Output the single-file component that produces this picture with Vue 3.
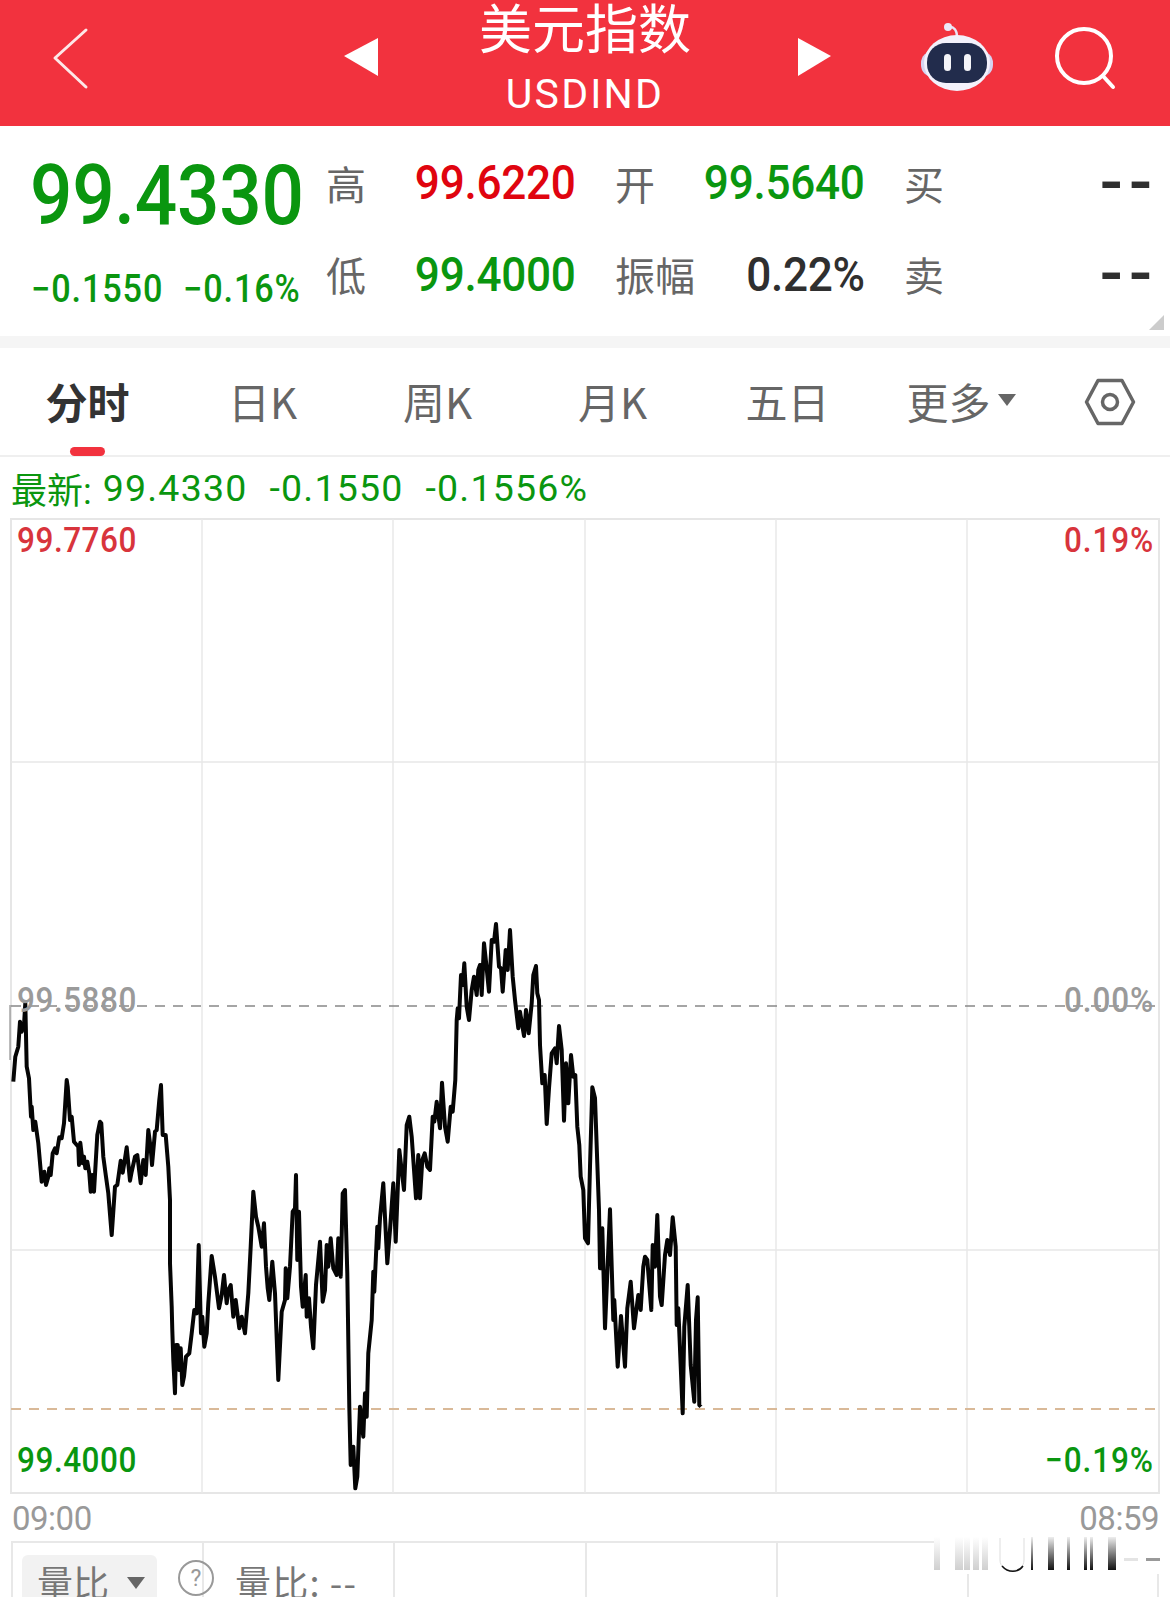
<template>
  <div class="page">
    <header class="topbar">
      <svg class="back" width="344" height="126" viewBox="0 0 344 126">
        <path d="M86 30 L55 58 L86 87" fill="none" stroke="#fde8e8" stroke-width="3" stroke-linecap="round" stroke-linejoin="round" />
      </svg>
      <svg class="prev" width="34" height="38" viewBox="0 0 34 38"><path d="M0 18 L34 0 V38 Z" fill="#fff" /></svg>
      <div class="title">
        <div class="title-cn">美元指数</div>
        <div class="title-en">USDIND</div>
      </div>
      <svg class="next" width="33" height="38" viewBox="0 0 33 38"><path d="M0 0 L33 18 L0 38 Z" fill="#fff" /></svg>
      <div class="top-actions">
        <svg width="76" height="70" viewBox="0 0 76 70">
          <path d="M38 16 C38 8 34 6 31 6" fill="none" stroke="#e9e4f6" stroke-width="2.5" />
          <circle cx="29" cy="6" r="4" fill="#ece8f8" />
          <rect x="2" y="30" width="72" height="26" rx="12" fill="#d6d3f0" />
          <ellipse cx="38" cy="42" rx="33" ry="28" fill="#f3f1fb" />
          <rect x="8" y="22" width="60" height="40" rx="19" fill="#222c4c" />
          <rect x="25" y="33" width="7" height="17" rx="3.5" fill="#f4f4f8" />
          <rect x="45" y="33" width="7" height="17" rx="3.5" fill="#f4f4f8" />
        </svg>
        <svg class="search" width="64" height="68" viewBox="0 0 64 68">
          <circle cx="31" cy="29" r="27" fill="none" stroke="#fff" stroke-width="4" />
          <path d="M50 49 L60 60" stroke="#fff" stroke-width="4" stroke-linecap="round" />
        </svg>
      </div>
    </header>

    <section class="quote">
      <div class="price-box">
        <div class="price">99.4330</div>
        <div class="change">
          <span class="change-abs">−0.1550</span>
          <span>−0.16%</span>
        </div>
      </div>
      <div class="stats">
        <div v-for="s in stats" :key="s.label" class="stat">
          <span class="stat-label">{{ s.label }}</span>
          <span class="stat-value" :class="s.tone">{{ s.value }}</span>
        </div>
      </div>
      <span class="corner"></span>
    </section>

    <nav class="tabs">
      <div v-for="(t, i) in tabs" :key="t" class="tab" :class="{ active: i === 0, more: i === 5 }">
        {{ t }}
        <i v-if="i === 5" class="caret"></i>
      </div>
      <div class="settings">
        <svg width="52" height="48" viewBox="0 0 52 48">
          <path d="M14 2.5 H38 L49.5 24 L38 45.5 H14 L2.5 24 Z" fill="none" stroke="#666" stroke-width="3.5" stroke-linejoin="round" />
          <circle cx="26" cy="24" r="7.5" fill="none" stroke="#666" stroke-width="3.5" />
        </svg>
      </div>
    </nav>

    <div class="latest">
      <span class="latest-cn">最新:</span>
      <span>99.4330</span>
      <span>-0.1550</span>
      <span>-0.1556%</span>
    </div>

    <div class="plot">
      <svg width="1170" height="977" viewBox="0 518 1170 977">
        <rect x="11" y="519" width="1148" height="974" fill="none" stroke="#e6e6e6" stroke-width="2" />
        <path v-for="x in columns" :key="x" :d="`M${x} 519 V1493`" stroke="#e8e8e8" stroke-width="1.5" />
        <path d="M11 762 H1159 M11 1250 H1159" stroke="#e8e8e8" stroke-width="1.5" />
        <path d="M11 1006 H1159" stroke="#888" stroke-width="1.5" stroke-dasharray="10 8" />
        <path d="M11 1409 H1159" stroke="#d9b998" stroke-width="2" stroke-dasharray="10 8" />
        <path d="M10 1005 V1060" stroke="#777" stroke-width="1" />
        <polyline :points="linePoints" fill="none" stroke="#050505" stroke-width="4" stroke-linejoin="round" />
      </svg>
      <span class="axis top left red">99.7760</span>
      <span class="axis top right red">0.19%</span>
      <span class="axis mid left gray">99.5880</span>
      <span class="axis mid right gray">0.00%</span>
      <span class="axis low left green">99.4000</span>
      <span class="axis low right green">−0.19%</span>
    </div>

    <div class="times">
      <span>09:00</span>
      <span>08:59</span>
    </div>

    <div class="volume">
      <i v-for="x in columns" :key="x" class="vline" :style="{ left: x - 13 + 'px' }"></i>
      <div class="vol-select">
        量比
        <i class="vol-caret"></i>
      </div>
      <svg class="help" width="38" height="38" viewBox="0 0 38 38">
        <circle cx="19" cy="19" r="17" fill="none" stroke="#999" stroke-width="2" />
        <text x="19" y="27" text-anchor="middle" font-size="23" fill="#999" font-family="Roboto, sans-serif">?</text>
      </svg>
      <span class="vol-text">量比: --</span>
      <svg class="smear" width="232" height="38" viewBox="0 0 232 38">
        <defs>
          <linearGradient id="fadeLight" x1="0" y1="0" x2="0" y2="1">
            <stop offset="0" stop-color="#fff" />
            <stop offset="1" stop-color="#cfcfcf" />
          </linearGradient>
          <linearGradient id="fadeDark" x1="0" y1="0" x2="0" y2="1">
            <stop offset="0" stop-color="#eee" />
            <stop offset="1" stop-color="#111" />
          </linearGradient>
        </defs>
        <rect width="232" height="38" fill="#fff" />
        <rect v-for="b in lightBars" :key="b[0]" :x="b[0]" y="1" :width="b[1]" height="33" fill="url(#fadeLight)" />
        <path d="M66 2 V24 C66 38 90 38 90 24 V2" fill="none" stroke="#ddd" stroke-width="1" />
        <path d="M68 30 C74 37 84 37 89 30" fill="none" stroke="#111" stroke-width="1.5" />
        <rect v-for="b in darkBars" :key="b[0]" :x="b[0]" y="1" :width="b[1]" height="33" fill="url(#fadeDark)" />
        <rect x="190" y="22" width="14" height="3" fill="#e4e4e4" />
        <rect x="212" y="22" width="14" height="3" fill="#999" />
      </svg>
    </div>
  </div>
</template>

<script setup>
const stats = [
  { label: '高', value: '99.6220', tone: 'red' },
  { label: '开', value: '99.5640', tone: 'green' },
  { label: '买', value: '--', tone: 'dark dash' },
  { label: '低', value: '99.4000', tone: 'green' },
  { label: '振幅', value: '0.22%', tone: 'dark' },
  { label: '卖', value: '--', tone: 'dark dash' }
]

const tabs = ['分时', '日K', '周K', '月K', '五日', '更多']
const columns = [202, 393, 585, 776, 967]

const lightBars = [[0, 6], [21, 8], [30, 6], [39, 6], [48, 6]]
const darkBars = [[97, 2], [114, 6], [133, 3], [150, 3], [156, 3], [174, 8]]

// traced from crops of the chart: each run is [offsetX, offsetY, x, y, x, y ...] at 3x
const runs = [
  [0, 900, 40,545,46,470,55,440,60,365,65,395,72,375,76,310,80,500,87,535,93,650,95,620,100,690,106,665,115,730,125,845,133,815,138,855,145,830,148,805,152,825,158,760,165,745,170,760,178,712,185,715,192,670,200,540,203,560,210,660,215,650,222,725,235,740,237,795,241,728,248,790,252,770,256,805,262,785,268,820,272,875,277,825,282,875,292,705,300,665,304,670,310,770,318,830,325,880,335,1005,345,860,352,855,362,782,368,818,372,795,380,742,390,842,395,815,405,770,412,765,422,850,430,780,437,825,445,690,452,745,456,795,465,695,470,690,478,600,483,555,488,705,497,705,505,800,510,900],
  [0, 1180, 510,250,515,380,517,450,520,540,525,640,528,495,533,495,538,570,542,505,547,615,552,590,558,530,568,520,575,460,583,390,590,400,596,195,603,460,607,410,613,500,620,460,625,370,635,228,645,290,657,385,665,345,672,285,680,370,685,330,692,315,700,410,707,360,718,445,725,410,735,460,745,340,752,200,760,35,768,110,775,140,785,200,792,130,798,260,803,325,808,360,817,245,825,340,835,600,845,395,855,360,857,265,862,355,870,260,878,95,885,85,888,-15,892,240,897,95,903,320,908,380,917,285,920,410,927,355,933,440,940,505,948,315,960,185,968,365,975,330,980,195,985,260,992,175,1000,265,1010,285,1015,175,1022,290,1028,40,1035,30,1042,280,1048,680,1052,855,1060,800,1066,925,1072,890,1080,680,1090,770,1095,640,1100,710,1105,520,1115,420,1120,275,1123,335,1132,140,1135,205,1140,115,1150,10,1162,250,1170,150,1180,10,1187,185],
  [340, 900, 178,750,192,870,200,675,208,650,215,710,228,895,235,765,240,895,247,780,254,760,262,800,270,810,278,650,283,665,290,605,300,685,306,548,315,680,323,725,332,620,338,635,346,540,350,360,353,325,357,355,363,225,368,255,373,190,380,320,387,360,395,270,402,230,410,285,415,210,420,195,425,285,432,130,438,185,447,275,455,120,462,125,468,72,477,200,483,205,488,275,497,150,503,210,510,90,518,230,525,300,535,385,540,335,552,408,558,330,566,400,575,310,580,225,588,198,592,280,597,300,600,435,607,550,614,525,620,672,627,565,635,460,645,445,650,490,657,378,665,450,672,662,678,490,685,610,693,465,700,530,706,525,712,680,718,735,722,830,730,870],
  [400, 1100, 555,415,564,430,570,200,577,-38,585,-6,592,190,597,330,600,505,607,385,615,685,630,328,640,660,643,600,653,800,663,648,675,800,682,625,692,545,702,685,715,585,722,630,730,500,735,470,742,480,754,630,758,435,765,500,772,345,780,590,785,615,795,465,802,420,810,465,818,352,827,440,830,675,835,625,848,940,853,680,863,555,872,795,883,905,888,660,893,592,898,915,903,920]
]

const linePoints = runs
  .flatMap(([ox, oy, ...coords]) => {
    const out = []
    for (let i = 0; i < coords.length; i += 2) {
      out.push(`${(ox + coords[i] / 3).toFixed(1)},${(oy + coords[i + 1] / 3).toFixed(1)}`)
    }
    return out
  })
  .join(' ')
</script>

<style>
html,
body {
  margin: 0;
  background: #fff;
}
</style>

<style scoped>
.page {
  position: relative;
  width: 1170px;
  height: 1597px;
  overflow: hidden;
  background: #fff;
  font-family: Roboto, 'Noto Sans CJK SC', sans-serif;
}

.topbar {
  display: grid;
  grid-template-columns: 344px 34px 414px 39px 1fr;
  align-items: center;
  height: 126px;
  background: #f2323e;
  color: #fff;
  overflow: hidden;
}

.back {
  display: block;
}

.prev,
.next {
  margin-top: -12px;
}

.next {
  justify-self: end;
}

.title {
  align-self: start;
  margin-top: -1px;
  text-align: center;
}

.title-cn {
  font-family: 'Noto Sans CJK SC', sans-serif;
  font-size: 53px;
  line-height: 55px;
}

.title-en {
  margin-top: 20px;
  font-size: 41px;
  line-height: 40px;
  letter-spacing: 2.2px;
}

.top-actions {
  display: flex;
  align-items: center;
  margin-left: 88px;
  margin-top: -14px;
}

.search {
  margin-left: 58px;
  margin-top: 10px;
}

.quote {
  position: relative;
  display: flex;
  height: 210px;
  border-bottom: 12px solid #f5f5f5;
}

.price-box {
  width: 326px;
  padding-left: 30px;
  box-sizing: border-box;
}

/* the app's numerals are a narrow DIN cut, so Roboto gets squeezed sideways */
.price {
  margin-top: 26px;
  font-size: 83px;
  line-height: 88px;
  font-weight: 500;
  letter-spacing: -0.3px;
  color: #0a960f;
  white-space: nowrap;
  transform: scaleX(0.9);
  transform-origin: left center;
}

.change {
  display: flex;
  margin-top: 27px;
  padding-left: 1px;
  font-size: 38px;
  line-height: 44px;
  font-weight: 500;
  letter-spacing: 1px;
  color: #0a960f;
  white-space: nowrap;
}

.change span {
  transform: scaleX(0.9);
  transform-origin: left center;
}

.change-abs {
  width: 152px;
}

.stats {
  display: grid;
  grid-template-columns: repeat(3, 248px);
  grid-auto-rows: 91.5px;
  column-gap: 41px;
  margin-top: 11px;
}

.stat {
  display: flex;
  align-items: center;
  justify-content: space-between;
}

.stat-label {
  font-family: 'Noto Sans CJK SC', sans-serif;
  font-size: 40px;
  color: #666;
}

.stat-value {
  margin-right: -2px;
  font-size: 49px;
  font-weight: 500;
  letter-spacing: -0.3px;
  transform: scaleX(0.9);
  transform-origin: right center;
}

.stat-value.dash {
  font-size: 68px;
  line-height: 50px;
  font-weight: 500;
  letter-spacing: 6px;
  margin-right: -6px;
  transform: none;
}

.red {
  color: #e0040f;
}

.green {
  color: #0a960f;
}

.dark {
  color: #2f2f2f;
}

.corner {
  position: absolute;
  right: 6px;
  bottom: 6px;
  width: 15px;
  height: 15px;
  background: #ccc;
  clip-path: polygon(100% 0, 100% 100%, 0 100%);
}

.tabs {
  display: flex;
  height: 109px;
  box-sizing: border-box;
  border-bottom: 2px solid #efefef;
  font-family: 'Noto Sans CJK SC', Roboto, sans-serif;
}

.tab {
  position: relative;
  display: flex;
  align-items: center;
  justify-content: center;
  width: 175px;
  padding-bottom: 2px;
  box-sizing: border-box;
  font-size: 42px;
  color: #666;
}

.tab.more {
  padding-right: 28px;
}

.tab.active {
  font-weight: 700;
  color: #333;
}

.tab.active::after {
  content: '';
  position: absolute;
  left: 70px;
  bottom: -1px;
  width: 35px;
  height: 9px;
  border-radius: 5px;
  background: #f2323e;
}

.caret {
  position: absolute;
  left: 123px;
  top: 46px;
  width: 18px;
  height: 12px;
  background: #666;
  clip-path: polygon(0 0, 100% 0, 50% 100%);
}

.settings {
  display: flex;
  align-items: center;
  justify-content: center;
  width: 120px;
}

.latest {
  display: flex;
  align-items: center;
  gap: 22px;
  height: 61px;
  padding-left: 11px;
  font-size: 37.5px;
  letter-spacing: 1.2px;
  color: #0a960f;
}

.latest > span {
  margin-top: 1px;
}

.latest-cn {
  margin-right: -11px;
  font-size: 36px;
  letter-spacing: 0;
}

.plot {
  position: relative;
  height: 977px;
}

.plot svg {
  display: block;
}

.axis {
  position: absolute;
  font-size: 35px;
  line-height: 40px;
  font-weight: 500;
  letter-spacing: 0.6px;
  transform: scaleX(0.9);
}

.axis.red {
  color: #d8343c;
}

.axis.gray {
  color: #9a9a9a;
}

.left {
  left: 17px;
  transform-origin: left center;
}

.right {
  right: 16px;
  letter-spacing: 1px;
  transform-origin: right center;
}

.top {
  top: 3px;
}

.mid {
  top: 463px;
}

.low {
  top: 923px;
}

.times {
  display: flex;
  justify-content: space-between;
  align-items: center;
  height: 46px;
  padding: 0 11px 0 12px;
  font-size: 33px;
  letter-spacing: -0.5px;
  color: #999;
}

.volume {
  position: relative;
  display: flex;
  align-items: flex-start;
  width: 1148px;
  height: 62px;
  margin-left: 11px;
  box-sizing: border-box;
  border: 2px solid #e8e8e8;
  border-bottom: 0;
  font-family: 'Noto Sans CJK SC', sans-serif;
  color: #777;
}

.vline {
  position: absolute;
  top: 0;
  bottom: 0;
  width: 1.5px;
  background: #e8e8e8;
}

.vol-select {
  position: relative;
  width: 135px;
  height: 60px;
  margin: 12px 0 0 9px;
  padding-left: 15px;
  box-sizing: border-box;
  border-radius: 6px 6px 0 0;
  background: #f2f2f2;
  font-size: 36px;
  line-height: 52px;
}

.vol-caret {
  position: absolute;
  left: 105px;
  top: 22px;
  width: 18px;
  height: 12px;
  background: #666;
  clip-path: polygon(0 0, 100% 0, 50% 100%);
}

.help {
  position: relative;
  margin: 16px 0 0 20px;
}

.vol-text {
  position: relative;
  margin: 12px 0 0 20px;
  font-size: 36px;
  line-height: 52px;
  letter-spacing: 1.2px;
}

.smear {
  position: absolute;
  left: 921px;
  top: -7px;
}
</style>
